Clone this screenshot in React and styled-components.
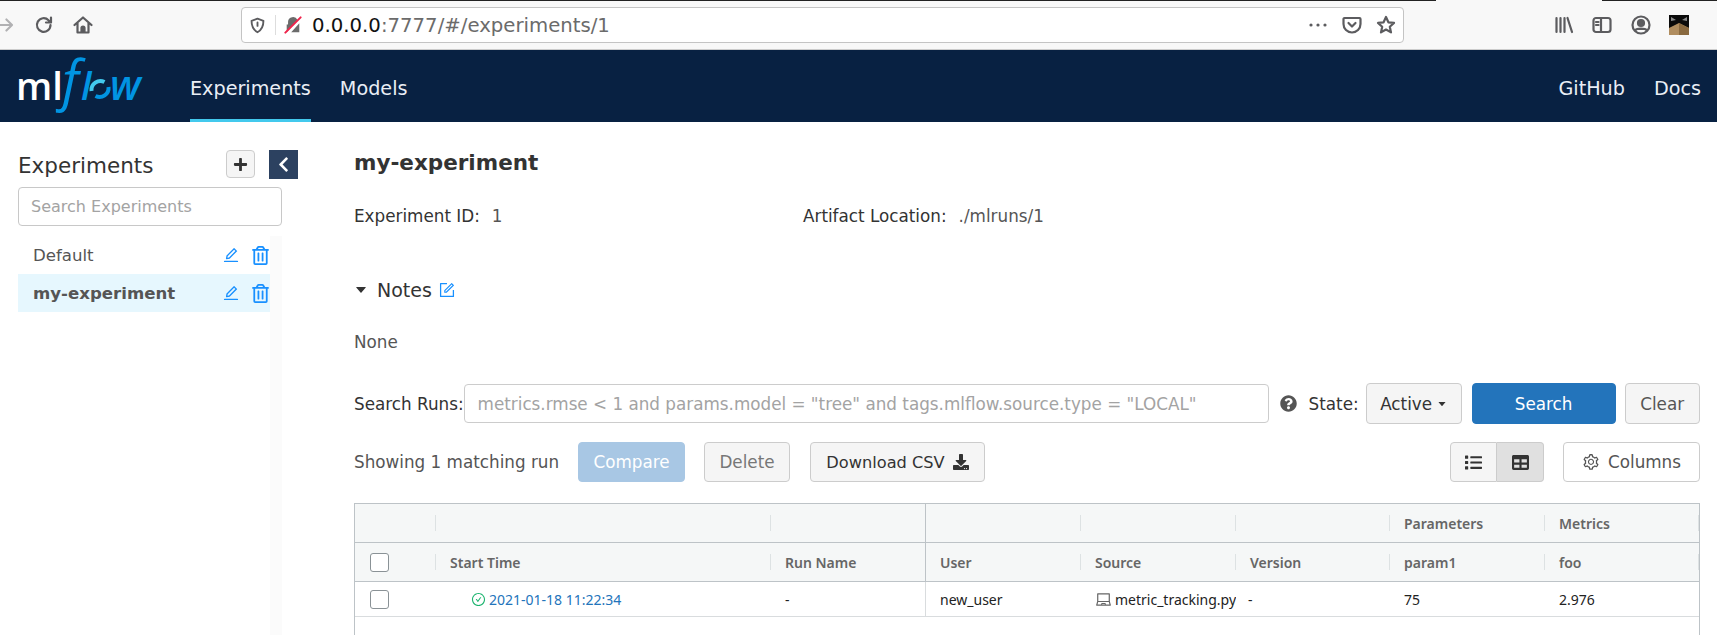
import React from 'react';
import styled, { createGlobalStyle } from 'styled-components';
import {
  AiOutlineEdit,
  AiOutlineForm,
  AiOutlineSetting,
  AiOutlineCheckCircle,
  AiOutlineLaptop,
  AiFillCaretDown,
} from 'react-icons/ai';
import {
  FaChevronLeft,
  FaPlus,
  FaQuestionCircle,
  FaDownload,
  FaList,
  FaTable,
  FaRegTrashAlt,
} from 'react-icons/fa';

const GlobalStyle = createGlobalStyle`
  html, body {
    margin: 0;
    height: 635px;
    overflow: hidden;
    background: #fff;
    font-family: "DejaVu Sans", sans-serif;
    color: #333;
  }
  * { box-sizing: border-box; }
`;

const Page = styled.div`
  height: 635px;
  display: flex;
  flex-direction: column;
`;

/* browser chrome */
const Chrome = styled.div`
  height: 50px;
  flex: none;
  display: flex;
  align-items: center;
  padding: 1px 15px 0 0;
  border-bottom: 1px solid #ccc;
  background:
    linear-gradient(90deg, #222 1436px, #f8f8f8 1436px, #f8f8f8 1602px, #222 1602px) top / 100% 1px no-repeat,
    #f8f8f8;
`;

const ChromeIcon = styled.svg`
  flex: none;
  width: ${p => p.$size || 20}px;
  height: ${p => p.$size || 20}px;
  margin-left: ${p => p.$gap || 0}px;
  fill: none;
  stroke: ${p => p.$color || '#5c5c5f'};
  stroke-width: ${p => p.$stroke || 2.2};
  stroke-linecap: round;
  stroke-linejoin: round;
`;

const UrlBar = styled.div`
  flex: none;
  width: 1163px;
  height: 36px;
  margin-left: 148px;
  display: flex;
  align-items: center;
  padding: 0 7px;
  background: #fff;
  border: 1px solid #c4c4c4;
  border-radius: 4px;
  font-size: 19.7px;
`;

const UrlDivider = styled.span`
  width: 1px;
  height: 20px;
  margin: 0 8px 0 9px;
  background: #ddd;
`;

const UrlHost = styled.span`
  margin-left: 10px;
  color: #111;
`;

const UrlPath = styled.span`
  flex: 1;
  color: #6b6b6b;
`;

const ChromeSeparator = styled.span`
  width: 1px;
  height: 40px;
  margin-left: 14px;
  background: #ddd;
`;

/* navbar */
const NavBar = styled.nav`
  height: 72px;
  flex: none;
  display: flex;
  background: #082142;
  padding: 0 16px;
  font-size: 19.2px;
`;

const Logo = styled.svg`
  width: 126px;
  height: 72px;
  flex: none;
  margin-right: 48px;
  overflow: visible;
`;

const NavLink = styled.a`
  display: flex;
  align-items: center;
  padding-top: 8px;
  color: #e9eef5;
  margin-left: ${p => p.$gap || 0}px;
  border-bottom: 3px solid ${p => (p.$active ? '#43c9ed' : 'transparent')};
`;

const NavSpacer = styled.div`
  flex: 1;
`;

/* body */
const Body = styled.div`
  flex: 1;
  min-height: 0;
  display: flex;
  padding: 28px 17px 0 18px;
`;

const Sidebar = styled.aside`
  width: 280px;
  flex: none;
  display: flex;
  flex-direction: column;
  margin-right: 56px;
`;

const SidebarHead = styled.div`
  display: flex;
  align-items: center;
  height: 28px;
  margin-bottom: 9px;
`;

const SidebarTitle = styled.h2`
  flex: 1;
  margin: 0;
  padding-top: 2px;
  font-size: 21.5px;
  font-weight: 400;
  color: #333;
`;

const AddButton = styled.button`
  width: 29px;
  height: 28px;
  padding: 0;
  display: flex;
  align-items: center;
  justify-content: center;
  background: #f5f5f5;
  border: 1px solid #ccc;
  border-radius: 4px;
  color: #333;
  font-size: 15px;
`;

const CollapseButton = styled.button`
  width: 29px;
  height: 29px;
  margin-left: 14px;
  padding: 0;
  display: flex;
  align-items: center;
  justify-content: center;
  background: #2c4160;
  border: 0;
  color: #fff;
  font-size: 17px;
`;

const SearchBox = styled.div`
  width: 264px;
  height: 39px;
  display: flex;
  align-items: center;
  padding: 0 12px;
  border: 1px solid #c8c8c8;
  border-radius: 4px;
  font-size: 16px;
  color: #a3a3a3;
`;

const ExperimentList = styled.ul`
  width: 264px;
  flex: 1;
  list-style: none;
  margin: 10px 0 0;
  padding: 0;
  border-right: 12px solid #fbfbfb;
`;

const ExperimentRow = styled.li`
  height: 38px;
  display: flex;
  align-items: center;
  padding: 0 0 0 15px;
  background: ${p => (p.$selected ? '#e6f7fe' : '#fff')};
  font-size: 16.6px;
  font-weight: ${p => (p.$selected ? 700 : 400)};
  color: #555;
`;

const ExperimentName = styled.span`
  flex: 1;
`;

const RowAction = styled.span`
  display: flex;
  font-size: ${p => p.$size}px;
  color: #1890ff;
  margin-right: ${p => p.$gap}px;
`;

const Main = styled.main`
  flex: 1;
  min-width: 0;
  display: flex;
  flex-direction: column;
`;

const Title = styled.h1`
  margin: 0;
  height: 28px;
  font-size: 21.5px;
  line-height: 26px;
  font-weight: 700;
  color: #333;
`;

const Meta = styled.div`
  display: flex;
  margin-top: 28px;
  height: 20px;
  font-size: 16.8px;
  line-height: 20px;
`;

const MetaItem = styled.div`
  width: ${p => p.$width || 'auto'};
  color: #333;
`;

const MetaValue = styled.span`
  margin-left: 12px;
  color: #555;
`;

const NotesHead = styled.div`
  display: flex;
  align-items: center;
  margin-top: 52px;
  height: 24px;
  font-size: 19px;
  color: #333;
`;

const Caret = styled.span`
  display: flex;
  margin-right: 9px;
  font-size: 14px;
  color: #333;
`;

const NotesIcon = styled.span`
  display: flex;
  margin-left: 6px;
  font-size: 18px;
  color: #1890ff;
`;

const NotesBody = styled.div`
  margin-top: 30px;
  height: 21px;
  font-size: 16.8px;
  line-height: 21px;
  color: #555;
`;

const SearchRow = styled.div`
  display: flex;
  align-items: center;
  margin-top: 30px;
  height: 41px;
  font-size: 16.8px;
  color: #333;
`;

const QueryInput = styled.div`
  flex: none;
  width: 805px;
  height: 39px;
  display: flex;
  align-items: center;
  padding: 0 13px;
  border: 1px solid #ccc;
  border-radius: 4px;
  color: #a3a3a3;
  white-space: nowrap;
  overflow: hidden;
`;

const Help = styled.span`
  display: flex;
  margin: 0 12px 0 11px;
  font-size: 17px;
  color: #555;
`;

const Button = styled.button`
  flex: none;
  width: ${p => p.$width}px;
  height: ${p => p.$height || 41}px;
  margin-left: ${p => p.$gap || 0}px;
  padding: 0;
  display: inline-flex;
  align-items: center;
  justify-content: center;
  gap: ${p => p.$inner || 5}px;
  font-family: inherit;
  font-size: ${p => p.$font || 16.8}px;
  border: 1px solid ${p => p.$border || '#ccc'};
  border-radius: 4px;
  background: ${p => p.$bg || '#f5f5f5'};
  color: ${p => p.$color || '#333'};
`;

const ActionRow = styled.div`
  display: flex;
  align-items: center;
  margin-top: 18px;
  height: 40px;
  font-size: 16.8px;
`;

const MatchCount = styled.span`
  width: 224px;
  flex: none;
  color: #555;
`;

const ViewToggle = styled.div`
  display: flex;
  margin-left: auto;
`;

const ToggleButton = styled.button`
  width: 47px;
  height: 40px;
  padding: 0;
  display: flex;
  align-items: center;
  justify-content: center;
  font-size: 17px;
  color: #333;
  border: 1px solid #ccc;
  border-left-width: ${p => (p.$active ? 0 : 1)}px;
  border-radius: ${p => (p.$active ? '0 4px 4px 0' : '4px 0 0 4px')};
  background: ${p => (p.$active ? '#e0e0e0' : '#f5f5f5')};
`;

const RunsTable = styled.div`
  margin-top: 21px;
  flex: 1;
  display: grid;
  grid-template-columns: 81px 335px 155px 155px 155px 154px 155px 1fr;
  grid-template-rows: 39px 39px 35px 1fr;
  border: 1px solid #bdc3c7;
  border-bottom: 0;
  font-family: "Noto Sans", sans-serif;
  font-size: 14px;
`;

const HeadCell = styled.div`
  display: flex;
  align-items: center;
  padding-left: ${p => p.$pad ?? 14}px;
  background: #f5f7f7;
  font-weight: 600;
  color: #666;
  position: relative;
  border-bottom: 1px solid #bdc3c7;
  border-right: ${p => (p.$split ? '1px solid #bdc3c7' : '0')};

  &::after {
    content: ${p => (p.$split ? 'none' : '""')};
    position: absolute;
    right: 0;
    top: 11px;
    bottom: 11px;
    width: 1px;
    background: #dde2e3;
  }
`;

const Cell = styled.div`
  display: flex;
  align-items: center;
  padding-left: ${p => p.$pad ?? 14}px;
  border-bottom: 1px solid #d9dcde;
  border-right: ${p => (p.$split ? '1px solid #d9dcde' : '0')};
  color: #222;
  white-space: nowrap;
  overflow: hidden;
`;

const TableRest = styled.div`
  grid-column: 1 / -1;
`;

const Check = styled.span`
  width: 19px;
  height: 19px;
  border: 1.5px solid #8a9296;
  border-radius: 3px;
  background: #fff;
`;

const RunLink = styled.a`
  display: flex;
  align-items: center;
  gap: 3px;
  color: #2374bb;
`;

const StatusIcon = styled.span`
  display: flex;
  font-size: 15px;
  color: #1db46f;
`;

const SourceIcon = styled.span`
  display: flex;
  margin-right: 3px;
  font-size: 17px;
  color: #666;
`;

const heads = ['', 'Parameters', 'Metrics'];

const App = () => (
  <Page>
    <GlobalStyle />
    <Chrome>
      <ChromeIcon viewBox="0 0 20 20" $size={16} $color="#b1b1b3" $stroke={2.6}>
        <path d="M0 10h14M8 3l7 7-7 7" />
      </ChromeIcon>
      <ChromeIcon viewBox="0 0 20 20" $gap={18}>
        <path d="M16.5 10a6.8 6.8 0 1 1-2-4.8L17 7.5M17 2.5v5h-5" />
      </ChromeIcon>
      <ChromeIcon viewBox="0 0 20 20" $gap={19}>
        <path d="M1.500 10L10 2.500 18.500 10M4.500 8v9.500h11V8" />
        <path d="M8.500 17v-4a1.500 1.500 0 0 1 3 0v4" fill="#5c5c5f" />
      </ChromeIcon>
      <UrlBar>
        <ChromeIcon viewBox="0 0 20 20" $size={17}>
          <path d="M10 2l7 2.500c0 6-1.500 10.500-7 13.500C4.500 15 3 10.500 3 4.500zM10 6.500v4" />
        </ChromeIcon>
        <UrlDivider />
        <ChromeIcon viewBox="0 0 20 20" $size={18} $color="none">
          <path d="M3 18V9.500h1.500V6.500a5.500 5.500 0 0 1 10.500-2L3 18zM8 18l9-10v10z" fill="#6b6b6b" />
          <path d="M1.500 18.500L18.500 1.500" stroke="#f0244c" />
        </ChromeIcon>
        <UrlHost>0.0.0.0</UrlHost>
        <UrlPath>:7777/#/experiments/1</UrlPath>
        <ChromeIcon viewBox="0 0 20 20" $size={20}>
          <circle cx="3" cy="10" r="1.600" fill="#5c5c5f" stroke="none" />
          <circle cx="10" cy="10" r="1.600" fill="#5c5c5f" stroke="none" />
          <circle cx="17" cy="10" r="1.600" fill="#5c5c5f" stroke="none" />
        </ChromeIcon>
        <ChromeIcon viewBox="0 0 20 20" $gap={14}>
          <path d="M2.500 3h15a1 1 0 0 1 1 1v5a8.500 8.500 0 0 1-17 0V4a1 1 0 0 1 1-1zM6.500 8l3.500 3.500L13.500 8" />
        </ChromeIcon>
        <ChromeIcon viewBox="0 0 20 20" $gap={14}>
          <path d="M10 2l2.400 5.300 5.600.6-4.200 3.800 1.200 5.700L10 14.500l-5 2.900 1.200-5.700L2 7.900l5.600-.6z" />
        </ChromeIcon>
      </UrlBar>
      <ChromeIcon viewBox="0 0 20 20" $gap={150}>
        <path d="M2.500 3v14M6.500 3v14M10.500 3v14M13.500 3l4.500 14" />
      </ChromeIcon>
      <ChromeIcon viewBox="0 0 20 20" $gap={18}>
        <rect x="1.500" y="3" width="17" height="14" rx="2.500" />
        <path d="M9 3v14M4 7h2.500M4 10h2.500" />
      </ChromeIcon>
      <ChromeIcon viewBox="0 0 20 20" $gap={19}>
        <circle cx="10" cy="10" r="8.500" />
        <circle cx="10" cy="8" r="3" fill="#5c5c5f" />
        <path d="M4.500 15c1.500-2 9.500-2 11 0" fill="#5c5c5f" />
      </ChromeIcon>
      <ChromeIcon viewBox="0 0 20 20" $gap={18} $color="none">
        <rect width="20" height="20" fill="#0b0b0b" />
        <path d="M0 20V13l10-5 10 5v7z" fill="#b08d5f" />
        <path d="M10 20V8L20 13v7z" fill="#8a6a40" />
        <path d="M2 2l5 3-5 1zM18 2l-5 3 5 1z" fill="#8c8c8c" />
      </ChromeIcon>
      <ChromeSeparator />
    </Chrome>

    <NavBar>
      <Logo viewBox="0 0 126 72">
        <text y="50" fontFamily="'Open Sans', sans-serif" fontWeight="600" fontSize="38">
          <tspan x="0" fill="#fff">ml</tspan>
          <tspan x="46" fill="#0194e2" fontStyle="italic" fontWeight="400" fontSize="54">f</tspan>
          <tspan x="65" fill="#0194e2" fontStyle="italic">l</tspan>
        </text>
        <path d="M75.500 41a9 9 0 0 1 13-9" fill="none" stroke="#43c9ed" strokeWidth="4" />
        <path d="M92.500 37a9 9 0 0 1-13 9" fill="none" stroke="#0194e2" strokeWidth="4" />
        <text x="94" y="50" fontFamily="'Open Sans', sans-serif" fontStyle="italic" fontWeight="600" fontSize="41" fill="#0194e2">w</text>
      </Logo>
      <NavLink $active>Experiments</NavLink>
      <NavLink $gap={29}>Models</NavLink>
      <NavSpacer />
      <NavLink>GitHub</NavLink>
      <NavLink $gap={29}>Docs</NavLink>
    </NavBar>

    <Body>
      <Sidebar>
        <SidebarHead>
          <SidebarTitle>Experiments</SidebarTitle>
          <AddButton><FaPlus /></AddButton>
          <CollapseButton><FaChevronLeft /></CollapseButton>
        </SidebarHead>
        <SearchBox>Search Experiments</SearchBox>
        <ExperimentList>
          {['Default', 'my-experiment'].map(name => (
            <ExperimentRow key={name} $selected={name === 'my-experiment'}>
              <ExperimentName>{name}</ExperimentName>
              <RowAction $gap={11} $size={18}><AiOutlineEdit /></RowAction>
              <RowAction $gap={0} $size={19}><FaRegTrashAlt /></RowAction>
            </ExperimentRow>
          ))}
        </ExperimentList>
      </Sidebar>

      <Main>
        <Title>my-experiment</Title>
        <Meta>
          <MetaItem $width="449px">Experiment ID:<MetaValue>1</MetaValue></MetaItem>
          <MetaItem>Artifact Location:<MetaValue>./mlruns/1</MetaValue></MetaItem>
        </Meta>
        <NotesHead>
          <Caret><AiFillCaretDown /></Caret>
          Notes
          <NotesIcon><AiOutlineForm /></NotesIcon>
        </NotesHead>
        <NotesBody>None</NotesBody>

        <SearchRow>
          Search Runs:
          <QueryInput>metrics.rmse &lt; 1 and params.model = "tree" and tags.mlflow.source.type = "LOCAL"</QueryInput>
          <Help><FaQuestionCircle /></Help>
          State:
          <Button $width={96} $gap={7}>Active <AiFillCaretDown size={10} /></Button>
          <Button $width={144} $gap={10} $bg="#2374bb" $border="#2374bb" $color="#fff">Search</Button>
          <Button $width={75} $gap={9} $color="#555">Clear</Button>
        </SearchRow>

        <ActionRow>
          <MatchCount>Showing 1 matching run</MatchCount>
          <Button $width={107} $height={40} $bg="#a8c7e4" $border="#a8c7e4" $color="#fff">Compare</Button>
          <Button $width={86} $height={40} $gap={19} $color="#777">Delete</Button>
          <Button $width={175} $height={40} $gap={20} $font={16.2} $inner={8}>Download CSV <FaDownload size={16} /></Button>
          <ViewToggle>
            <ToggleButton><FaList /></ToggleButton>
            <ToggleButton $active><FaTable /></ToggleButton>
          </ViewToggle>
          <Button $width={137} $height={40} $gap={19} $bg="#fff" $color="#555" $inner={8}>
            <AiOutlineSetting size={18} /> Columns
          </Button>
        </ActionRow>

        <RunsTable>
          <HeadCell />
          <HeadCell />
          <HeadCell $split />
          <HeadCell />
          <HeadCell />
          {heads.map(h => <HeadCell key={h}>{h}</HeadCell>)}

          <HeadCell $pad={15}><Check /></HeadCell>
          <HeadCell>Start Time</HeadCell>
          <HeadCell $split>Run Name</HeadCell>
          <HeadCell>User</HeadCell>
          <HeadCell>Source</HeadCell>
          <HeadCell>Version</HeadCell>
          <HeadCell>param1</HeadCell>
          <HeadCell>foo</HeadCell>

          <Cell $pad={15}><Check /></Cell>
          <Cell $pad={35}>
            <RunLink><StatusIcon><AiOutlineCheckCircle /></StatusIcon>2021-01-18 11:22:34</RunLink>
          </Cell>
          <Cell $split>-</Cell>
          <Cell>new_user</Cell>
          <Cell><SourceIcon><AiOutlineLaptop /></SourceIcon>metric_tracking.py</Cell>
          <Cell $pad={12}>-</Cell>
          <Cell>75</Cell>
          <Cell>2.976</Cell>
          <TableRest />
        </RunsTable>
      </Main>
    </Body>
  </Page>
);

export default App;
